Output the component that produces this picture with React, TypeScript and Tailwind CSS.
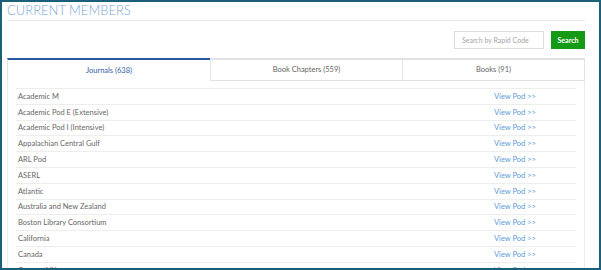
const members = [
  "Academic M",
  "Academic Pod E (Extensive)",
  "Academic Pod I (Intensive)",
  "Appalachian Central Gulf",
  "ARL Pod",
  "ASERL",
  "Atlantic",
  "Australia and New Zealand",
  "Boston Library Consortium",
  "California",
  "Canada",
  "ConnectNY",
];

export default function App() {
  return (
    <div
      className="w-[601px] h-[270px] overflow-hidden bg-white border-2 border-[#1b5f7b]"
      style={{ fontFamily: "Lato, 'Open Sans', sans-serif" }}
    >
      <div className="pl-[5px] pr-[14px]">
        <h1 className="text-[13px] leading-none font-light text-[#7aa6d8] pt-[2px] h-[18px]">
          CURRENT MEMBERS
        </h1>
        <div className="border-t border-[#e6e6e6]" />

        <div className="flex justify-end items-center gap-[7px] mt-[10px] h-[18px]">
          <input
            placeholder="Search by Rapid Code"
            className="w-[90px] h-[18px] border border-[#dcdcdc] px-[7px] text-[7px] text-[#999] placeholder:text-[#a5a5a5] outline-none"
          />
          <button className="w-[34px] h-[18px] bg-[#149a14] text-white text-[7px] font-bold">
            Search
          </button>
        </div>

        <div className="mt-[9px] flex h-[23px]">
          <div className="w-[203px] border-t-2 border-t-[#2b58a6] border-l border-l-[#e2e2e2] flex items-center justify-center text-[7.5px] text-[#345da3]">
            Journals (638)
          </div>
          <div className="w-[192px] border-t-2 border-t-[#e2e2e2] border-b border-b-[#e2e2e2] border-l border-l-[#e6e6e6] flex items-center justify-center text-[7.5px] text-[#666]">
            Book Chapters (559)
          </div>
          <div className="flex-1 border-t-2 border-t-[#e2e2e2] border-b border-b-[#e2e2e2] border-l border-l-[#e6e6e6] border-r border-r-[#e2e2e2] flex items-center justify-center text-[7.5px] text-[#666]">
            Books (91)
          </div>
        </div>

        <div className="border-l border-r border-[#ededed] px-[8px] pt-[7px] h-[200px]">
          <div className="border-t border-[#ededed]">
            {members.map((m) => (
              <div
                key={m}
                className="grid grid-cols-[478px_1fr] items-center h-[15.8px] border-b border-[#ededed] text-[7.5px]"
              >
                <span className="pl-[2px] text-[#666]">{m}</span>
                <span className="text-[#5a9ad9]">View Pod &gt;&gt;</span>
              </div>
            ))}
          </div>
        </div>
      </div>
    </div>
  );
}
